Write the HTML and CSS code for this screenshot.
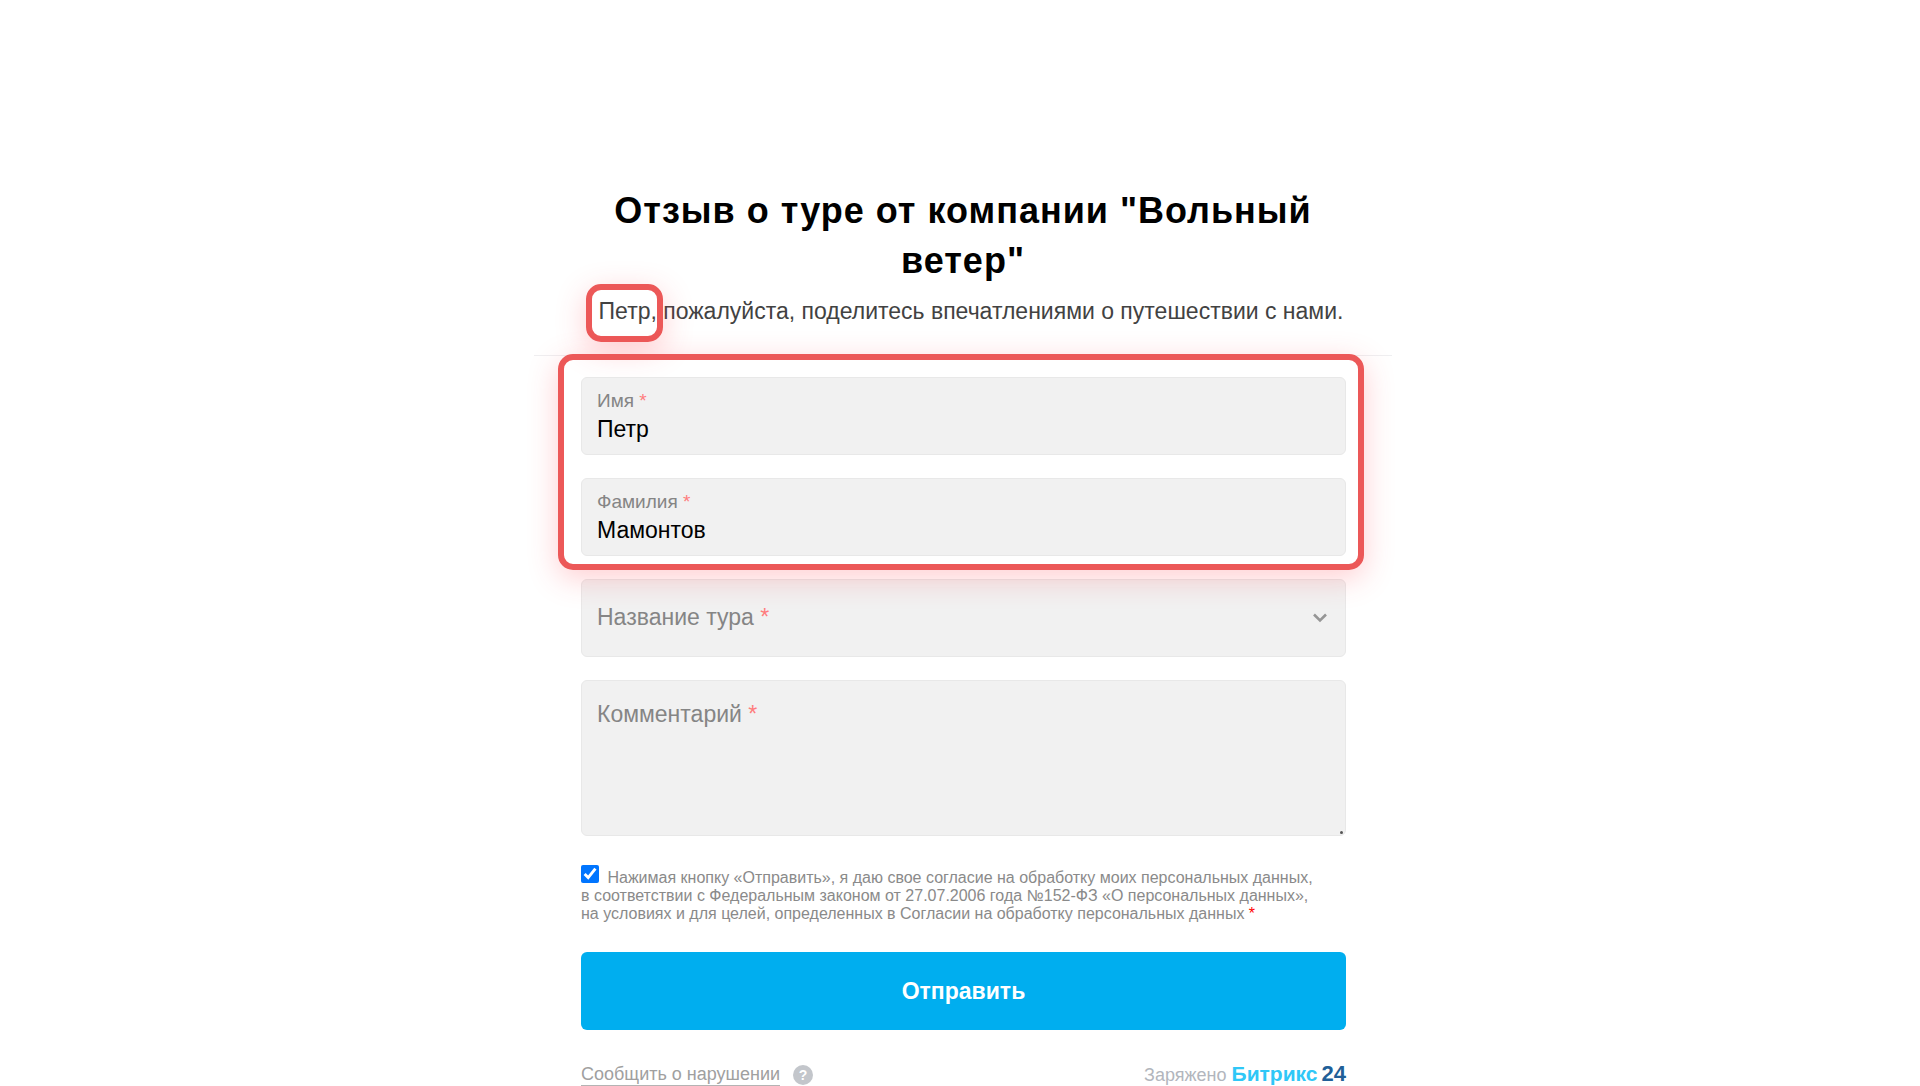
FILE: index.html
```html
<!DOCTYPE html>
<html lang="ru">
    <head>
         <meta charset="utf-8">
         <meta name="viewport" content="width=device-width, initial-scale=1">
         <title>Отзыв о туре от компании "Вольный ветер"</title>
         <link rel="stylesheet" href="styles.css">
    </head>
    <body>
        <main class="form-page">
            <header class="form-header">
                <h1>Отзыв о туре от компании "Вольный ветер"</h1>
                <p><span class="marked marked-name">Петр,</span> пожалуйста, поделитесь впечатлениями о путешествии с нами.</p>
            </header>
            <form class="form-body">
                <div class="fields marked marked-fields">
                    <div class="field">
                        <label for="first_name">Имя <span class="required">*</span></label>
                        <input type="text" id="first_name" value="Петр">
                    </div>
                    <div class="field">
                        <label for="last_name">Фамилия <span class="required">*</span></label>
                        <input type="text" id="last_name" value="Мамонтов">
                    </div>
                </div>
                <div class="field field-empty">
                    <label for="tour">Название тура <span class="required">*</span></label>
                    <select id="tour"><option value=""></option></select>
                    <svg class="arrow" width="14" height="10" viewBox="0 0 14 10"><path d="M1 1.5 L7 7.5 L13 1.5" fill="none" stroke="#969696" stroke-width="2.6"/></svg>
                </div>
                <div class="field field-empty field-comment">
                    <label for="comment">Комментарий <span class="required">*</span></label>
                    <textarea id="comment"></textarea>
                </div>
                <div class="consent">
                    <input type="checkbox" id="consent" checked>
                    <label for="consent">Нажимая кнопку «Отправить», я даю свое согласие на обработку моих персональных данных,<br>в соответствии с Федеральным законом от 27.07.2006 года №152-ФЗ «О персональных данных»,<br>на условиях и для целей, определенных в Согласии на обработку персональных данных <span class="required">*</span></label>
                </div>
                <button type="submit" class="submit">Отправить</button>
            </form>
            <footer class="form-footer">
                <div class="report">
                    <a href="#">Сообщить о нарушении</a>
                    <span class="help">?</span>
                </div>
                <div class="powered">Заряжено <a href="#"><b class="brand">Битрикс</b><b class="brand-num">24</b></a></div>
            </footer>
        </main>
    </body>
</html>
```
FILE: styles.css
```css
*{
    box-sizing: border-box;
}
body{
    margin: 0;
    padding: 186px 0 0 6px;
    background-color: white;
    font-family: "Liberation Sans", Arial, sans-serif;
}
.form-page{
    max-width: 858px;
    margin: 0 auto;
}

/*Заголовок*/
.form-header{
    height: 170px;
    padding: 0 46px;
    text-align: center;
    border-bottom: 1px solid #efeff1;
}
.form-header h1{
    margin: 0;
    font-size: 36px;
    line-height: 50px;
    letter-spacing: 1px;
    color: black;
}
.form-header p{
    margin: 0;
    padding: 12px 0 0 16px;
    font-size: 23px;
    line-height: 26px;
    color: #424242;
}

/*Красные рамки поверх формы*/
.marked{
    position: relative;
    z-index: 1;
}
.marked::after{
    content: "";
    position: absolute;
    border: 6px solid #ec5858;
    border-radius: 15px;
    box-shadow: 0 8px 30px rgba(255, 60, 70, 0.25);
    pointer-events: none;
}
.marked-name::after{
    inset: -14px -6px -18px -13px;
}
.marked-fields::after{
    inset: -23px -18px -14px -23px;
}

/*Поля*/
.form-body{
    display: flex;
    flex-direction: column;
    gap: 23px;
    padding: 21px 46px 0 47px;
}
.fields{
    display: flex;
    flex-direction: column;
    gap: 23px;
}
.field{
    height: 78px;
    padding: 11px 15px;
    display: flex;
    flex-direction: column;
    background-color: #f1f1f1;
    border: 1px solid #e8e8e8;
    border-radius: 6px;
}
.field label{
    font-size: 19px;
    line-height: 24px;
    color: #858585;
}
.required{
    color: #ff7d7d;
}
.field input{
    width: 100%;
    padding: 0;
    border: 0;
    background: none;
    font-family: inherit;
    font-size: 23px;
    line-height: 32px;
    color: black;
    outline: none;
}
.field-empty{
    position: relative;
    padding: 0;
}
.field-empty label{
    position: absolute;
    top: 23px;
    left: 15px;
    font-size: 23px;
    line-height: 28px;
    pointer-events: none;
}
.field-empty select, .field-empty textarea{
    width: 100%;
    height: 100%;
    padding: 20px 15px;
    border: 0;
    background: none;
    font-family: inherit;
    font-size: 23px;
    appearance: none;
    resize: none;
    outline: none;
}
.arrow{
    position: absolute;
    top: 33px;
    right: 18px;
    pointer-events: none;
}
.field-comment{
    height: 156px;
}
.field-comment label{
    top: 19px;
}
/*Уголок для изменения размера*/
.field-comment::after{
    content: "";
    position: absolute;
    right: 2px;
    bottom: 1px;
    width: 3px;
    height: 3px;
    border-radius: 50%;
    background-color: #555;
}

.consent{
    padding-top: 6px;
    font-size: 16px;
    line-height: 18px;
    color: #8a8a8a;
}
.consent input{
    width: 18px;
    height: 18px;
    margin: 0 4px 0 0;
    accent-color: #0075ff;
}
.consent .required{
    color: red;
}
.submit{
    height: 78px;
    margin-top: 6px;
    border: 0;
    border-radius: 6px;
    background-color: #00aeef;
    font-family: inherit;
    font-size: 23px;
    font-weight: bold;
    color: white;
}

/*Подвал*/
.form-footer{
    display: flex;
    justify-content: space-between;
    align-items: center;
    padding: 32px 46px 0 47px;
    line-height: 24px;
}
.report{
    display: flex;
    align-items: center;
    gap: 13px;
}
.report a{
    font-size: 18px;
    line-height: 22px;
    color: #a0a0a0;
    text-decoration: none;
    border-bottom: 1px solid #b4b4b4;
}
.help{
    width: 20px;
    height: 20px;
    border-radius: 50%;
    background-color: #c3c6cb;
    font-size: 14px;
    font-weight: bold;
    line-height: 20px;
    text-align: center;
    color: white;
}
.powered{
    font-size: 18px;
    color: #b2b6bd;
}
.powered a{
    text-decoration: none;
}
.brand{
    font-size: 21px;
    color: #2fc7f7;
}
.brand-num{
    margin-left: 4px;
    font-size: 22px;
    color: #215f98;
}
```
